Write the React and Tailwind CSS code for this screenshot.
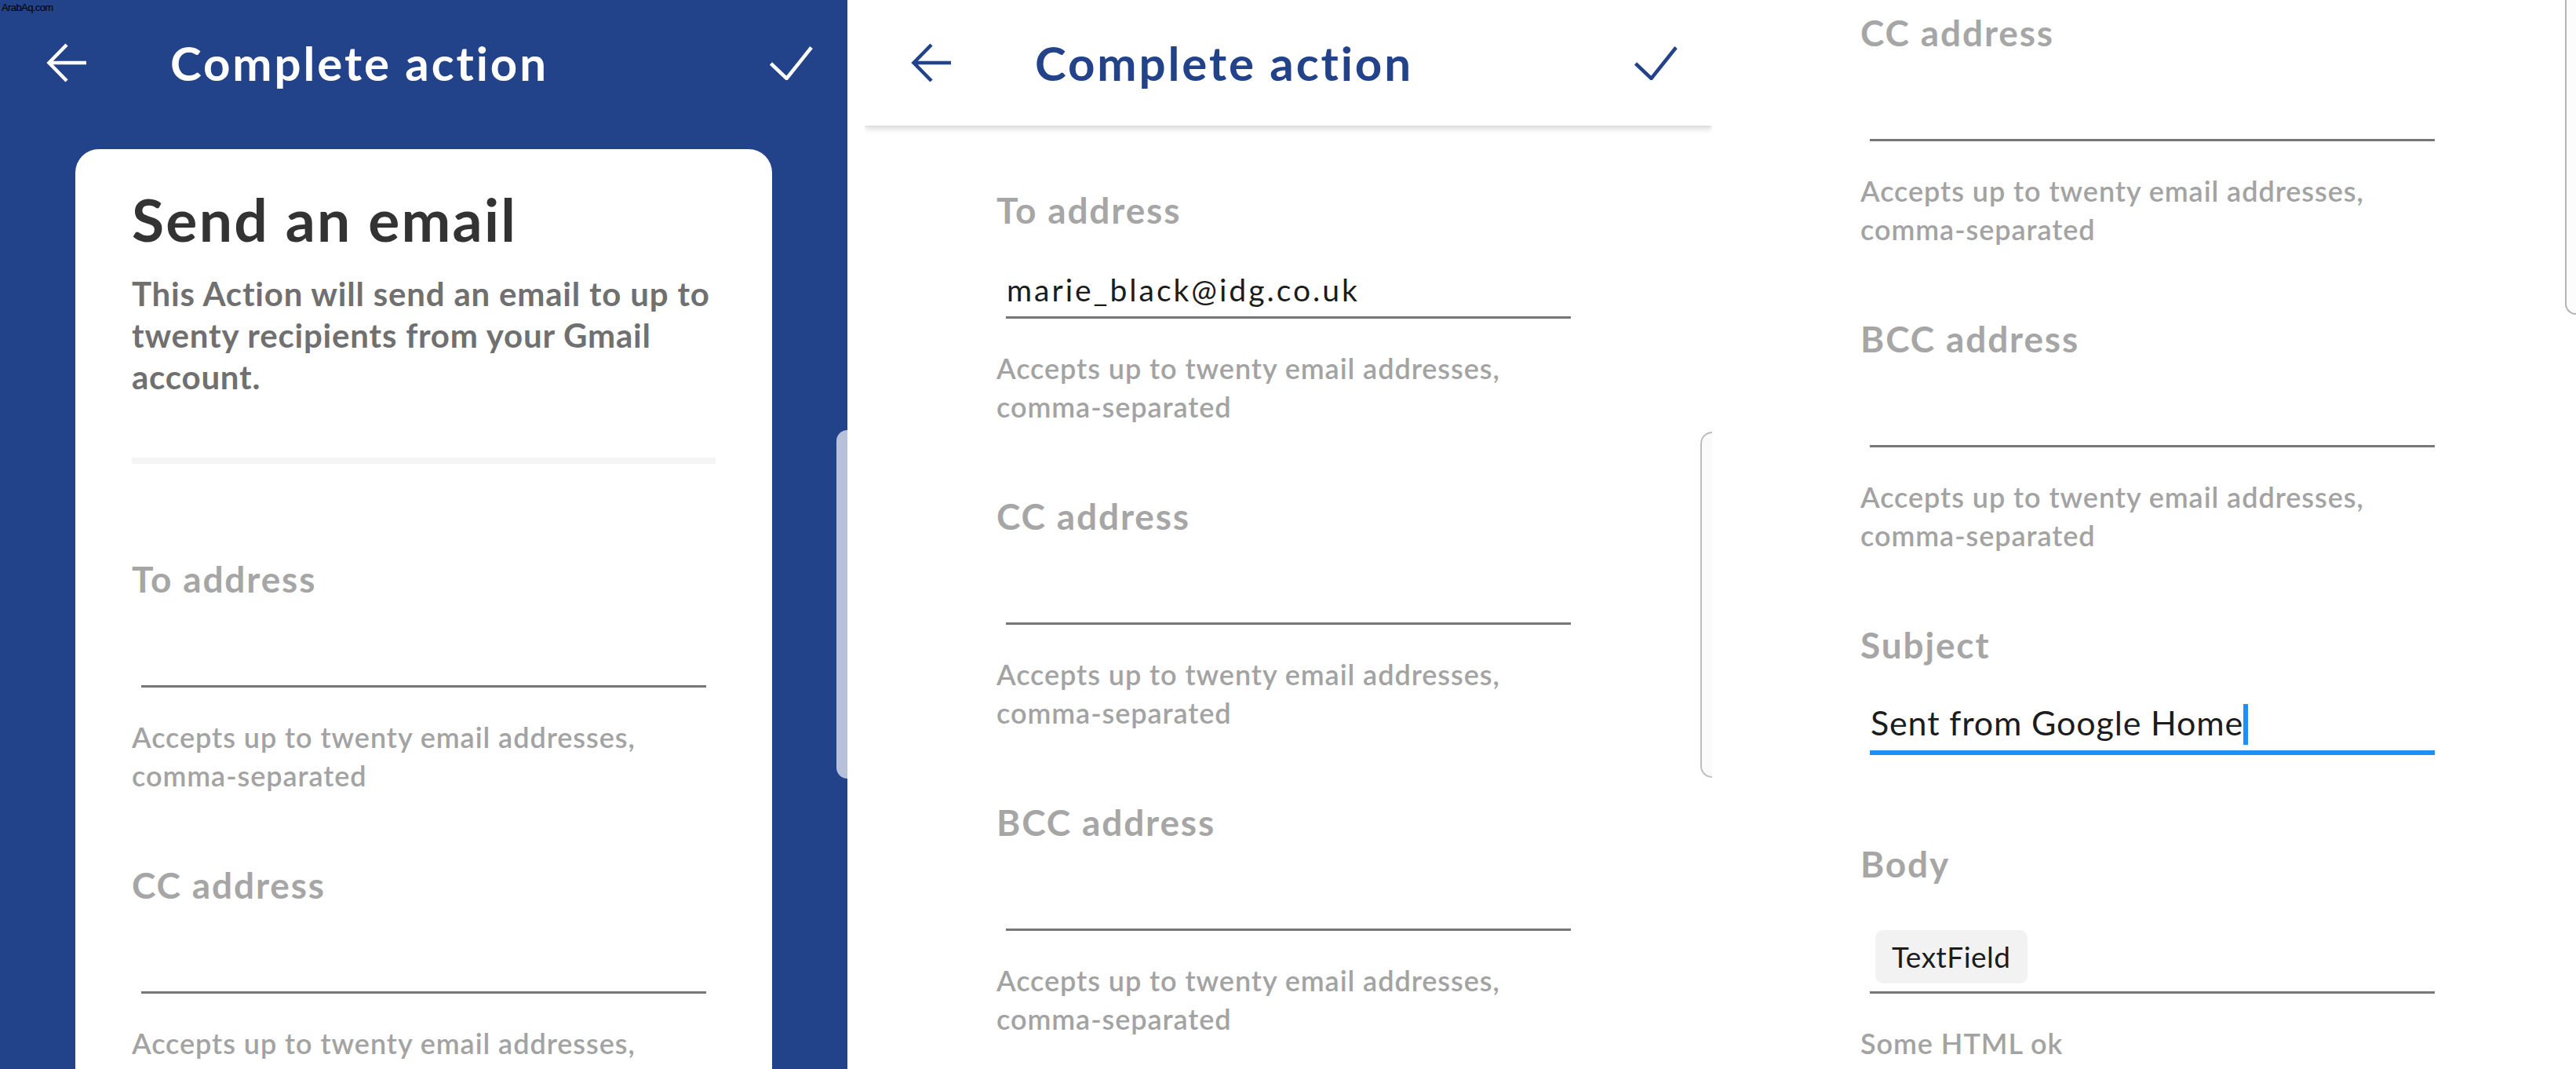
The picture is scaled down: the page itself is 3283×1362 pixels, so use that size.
import React from "react";

function ArrowBack({ color }) {
  return (
    <svg width="52" height="50" viewBox="0 0 52 50" fill="none" stroke={color} strokeWidth="4.5" strokeLinecap="butt" strokeLinejoin="miter">
      <path d="M51 25H4M26 2L3.5 25L26 48" />
    </svg>
  );
}

function Check({ color }) {
  return (
    <svg width="55" height="43" viewBox="0 0 55 43" fill="none" stroke={color} strokeWidth="4.5" strokeLinecap="butt" strokeLinejoin="miter">
      <path d="M1.5 22L21.5 41L53 1.5" />
    </svg>
  );
}

function Header({ dark }) {
  const c = dark ? "#ffffff" : "#22428a";
  return (
    <div className="shrink-0 flex items-center h-[160px] pl-[59px] pr-[44px]">
      <ArrowBack color={c} />
      {dark ? (
        <div className="ml-[106px] text-[60px] leading-[72px] font-bold text-white tracking-[2.9px] whitespace-nowrap">Complete action</div>
      ) : (
        <div className="ml-[106px] text-[60px] leading-[72px] font-bold text-[#22428a] tracking-[2.9px] whitespace-nowrap">Complete action</div>
      )}
      <div className="flex-1" />
      <Check color={c} />
    </div>
  );
}

function Label({ children }) {
  return <div className="text-[46px] leading-[56px] font-bold text-[#a6a6a6] tracking-[1.85px] whitespace-nowrap">{children}</div>;
}

function Helper({ children }) {
  return <div className="mt-[39px] text-[36px] leading-[49px] font-semibold text-[#a3a3a3] tracking-[0.95px] whitespace-nowrap">{children}</div>;
}

function Field({ label, value }) {
  return (
    <div className="flex flex-col mb-[87px]">
      <Label>{label}</Label>
      <div className="mx-[12px] h-[110px] border-b-[3px] border-[#777777] flex items-end pb-[10px] pl-[1px]">
        {value ? <div className="text-[39px] leading-[48px] text-[#1c1c1c] tracking-[3px] whitespace-nowrap">{value}</div> : null}
      </div>
      <Helper>
        Accepts up to twenty email addresses,
        <br />
        comma-separated
      </Helper>
    </div>
  );
}

function SubjectField() {
  return (
    <div className="flex flex-col">
      <Label>Subject</Label>
      <div className="mx-[12px] h-[112px] border-b-[6px] border-[#1e90f4] flex items-end pb-[7px] pl-[1px]">
        <div className="flex items-center">
          <span className="text-[43px] leading-[52px] text-[#1c1c1c] tracking-[0.85px] whitespace-nowrap">Sent from Google Home</span>
          <span className="inline-block w-[6px] h-[52px] bg-[#1e90f4] mt-[4px]" />
        </div>
      </div>
    </div>
  );
}

function BodyField() {
  return (
    <div className="flex flex-col mt-[111px]">
      <Label>Body</Label>
      <div className="mx-[12px] h-[137px] border-b-[3px] border-[#777777] flex items-end pb-[10px] pl-[7px]">
        <div className="h-[68px] px-[21px] rounded-[10px] bg-[#f2f2f2] flex items-center text-[37px] text-[#1c1c1c] tracking-[0.5px]">TextField</div>
      </div>
      <Helper>Some HTML ok</Helper>
    </div>
  );
}

export default function App() {
  return (
    <div className="w-[3283px] h-[1362px] overflow-hidden flex bg-white font-['Lato','Noto_Sans',sans-serif]">
      {/* Left screen */}
      <div className="relative w-[1080px] h-[1362px] shrink-0 bg-[#22428a] flex flex-col overflow-hidden">
        <div className="absolute left-[2px] top-[3px] text-[13px] leading-[14px] tracking-[-0.6px] text-black font-['Liberation_Sans',sans-serif]">ArabAq.com</div>
        <Header dark />
        <div className="shrink-0 mt-[30px] mx-[96px] h-[1200px] bg-white rounded-t-[30px] px-[72px] pt-[44px]">
          <div className="text-[75px] leading-[90px] font-bold text-[#333333] tracking-[2.3px] whitespace-nowrap">Send an email</div>
          <div className="mt-[24px] text-[42px] leading-[53px] font-bold text-[#707070] tracking-[0.8px] whitespace-nowrap">
            This Action will send an email to up to
            <br />
            twenty recipients from your Gmail
            <br />
            account.
          </div>
          <div className="mt-[76px] h-[8px] bg-[#f4f4f4]" />
          <div className="mt-[119px]">
            <Field label="To address" />
            <Field label="CC address" />
          </div>
        </div>
        <div className="absolute left-[1066px] top-[548px] w-[14px] h-[444px] bg-[#b7c2da] rounded-l-[16px]" />
      </div>

      <div className="w-[22px] shrink-0 bg-white" />

      {/* Middle screen */}
      <div className="relative w-[1080px] h-[1362px] shrink-0 bg-white flex flex-col overflow-hidden">
        <div className="shrink-0 relative z-10 bg-white shadow-[0_4px_7px_rgba(0,0,0,0.16)]">
          <Header />
        </div>
        <div className="shrink-0 px-[168px] pt-[80px]">
          <Field label="To address" value="marie_black@idg.co.uk" />
          <Field label="CC address" />
          <Field label="BCC address" />
        </div>
        <div className="absolute right-0 top-[550px] w-[15px] h-[441px] border-2 border-r-0 border-[#bdbdbd] rounded-l-[16px] bg-[#fafafa]" />
      </div>

      <div className="w-[21px] shrink-0 bg-white" />

      {/* Right screen */}
      <div className="relative w-[1080px] h-[1362px] shrink-0 bg-white overflow-hidden">
        <div className="px-[168px] pt-[14px]">
          <Field label="CC address" />
          <Field label="BCC address" />
          <SubjectField />
          <BodyField />
        </div>
        <div className="absolute right-0 top-[-10px] w-[14px] h-[411px] border-l-2 border-b-2 border-[#b3b3b3] rounded-bl-[16px] bg-[#fcfcfc]" />
      </div>
    </div>
  );
}
